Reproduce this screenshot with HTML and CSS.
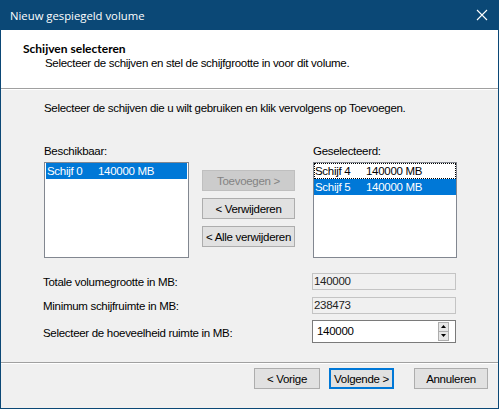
FILE: index.html
```html
<!DOCTYPE html>
<html lang="nl">
<head>
  <meta charset="UTF-8" />
  <title>Nieuw gespiegeld volume</title>
  <link rel="stylesheet" href="styles.css">
</head>
<body>
  <div class="window">
    <div class="titlebar">
      <span class="title">Nieuw gespiegeld volume</span>
      <svg class="close" width="12" height="12" viewBox="0 0 12 12">
        <path d="M1 1 L11 11 M11 1 L1 11" stroke="#fff" stroke-width="1.1" fill="none" />
      </svg>
    </div>

    <div class="header">
      <div class="header-title">Schijven selecteren</div>
      <div class="header-sub">Selecteer de schijven en stel de schijfgrootte in voor dit volume.</div>
    </div>

    <div class="content">
      <p class="intro">Selecteer de schijven die u wilt gebruiken en klik vervolgens op Toevoegen.</p>

      <div class="pickers">
        <div class="picker picker-left">
          <div class="picker-label">Beschikbaar:</div>
          <div class="listbox">
            <div class="item selected"><span class="disk">Schijf 0</span><span>140000 MB</span></div>
          </div>
        </div>

        <div class="actions">
          <button class="btn" disabled>Toevoegen &gt;</button>
          <button class="btn">&lt; Verwijderen</button>
          <button class="btn">&lt; Alle verwijderen</button>
        </div>

        <div class="picker picker-right">
          <div class="picker-label">Geselecteerd:</div>
          <div class="listbox">
            <div class="item focused"><span class="disk">Schijf 4</span><span>140000 MB</span></div>
            <div class="item selected"><span class="disk">Schijf 5</span><span>140000 MB</span></div>
          </div>
        </div>
      </div>

      <div class="sizes">
        <div class="size-label">Totale volumegrootte in MB:</div>
        <div class="field readonly">140000</div>

        <div class="size-label">Minimum schijfruimte in MB:</div>
        <div class="field readonly">238473</div>

        <div class="size-label">Selecteer de hoeveelheid ruimte in MB:</div>
        <div class="field spin">
          <span class="spin-value">140000</span>
          <span class="spin-buttons">
            <span class="spin-btn"><svg width="5" height="3" viewBox="0 0 5 3"><path d="M2.5 0 L5 3 L0 3 Z" fill="#000"/></svg></span>
            <span class="spin-btn"><svg width="5" height="3" viewBox="0 0 5 3"><path d="M0 0 L5 0 L2.5 3 Z" fill="#000"/></svg></span>
          </span>
        </div>
      </div>
    </div>

    <div class="footer">
      <button class="btn btn-back">&lt; Vorige</button>
      <button class="btn btn-next">Volgende &gt;</button>
      <button class="btn btn-cancel">Annuleren</button>
    </div>
  </div>
</body>
</html>
```

FILE: styles.css
```css
body {
  margin: 0;
  font-family: 'Liberation Sans', Arial, sans-serif;
  font-size: 11.5px;
  letter-spacing: -0.3px;
  color: #000;
  background: #f0f0f0;
}

.window {
  width: 499px;
  height: 409px;
  box-sizing: border-box;
  border: 1px solid #0b4876;
  border-top: none;
  display: flex;
  flex-direction: column;
  background: #f0f0f0;
}

/* ===== TITLE BAR ===== */
.titlebar {
  height: 30px;
  margin: 0 -1px;
  background: #0b4876;
  display: flex;
  align-items: center;
  justify-content: space-between;
  padding: 0 10px 0 10px;
  flex-shrink: 0;
}

.title {
  color: #fff;
  font-family: 'Open Sans', 'Noto Sans', sans-serif;
  font-size: 11.3px;
  letter-spacing: 0;
  padding-top: 1px;
}

.close { display: block; margin-right: 1px; }

/* ===== WIZARD HEADER ===== */
.header {
  height: 59px;
  background: #fff;
  border-bottom: 1px solid #a0a0a0;
  padding: 11px 0 0 22px;
  box-sizing: border-box;
  flex-shrink: 0;
}

.header-title {
  font-family: Lato, 'Liberation Sans', sans-serif;
  font-size: 12px;
  font-weight: bold;
  letter-spacing: 0;
  line-height: 15px;
}

.header-sub {
  line-height: 15px;
  margin-left: 22px;
}

/* ===== CONTENT ===== */
.content {
  flex: 1;
  padding: 11px 0 0 43px;
  border-top: 1px solid #fff;
}

.intro {
  margin: 0;
  line-height: 14px;
}

.pickers {
  display: flex;
  margin-top: 29px;
}

.picker-label {
  line-height: 14px;
  margin-bottom: 4px;
}

.listbox {
  height: 96px;
  box-sizing: border-box;
  background: #fff;
  border: 1px solid #828790;
  padding: 0 1px;
}

.picker-left .listbox { width: 145px; }
.picker-right .listbox { width: 144px; padding: 0; }

.item {
  height: 16px;
  line-height: 16px;
  padding-left: 1px;
  white-space: nowrap;
  box-sizing: border-box;
}

.item .disk {
  display: inline-block;
  width: 51px;
}

.item.selected {
  background: #0078d7;
  color: #fff;
}

.item.focused {
  outline: 1px dotted #000;
  outline-offset: -1px;
}

.actions {
  display: flex;
  flex-direction: column;
  gap: 7px;
  margin: 26px 18px 0 13px;
}

.btn {
  font-family: inherit;
  font-size: 11.5px;
  letter-spacing: -0.3px;
  color: #000;
  height: 21px;
  padding: 0;
  white-space: nowrap;
  background: #e1e1e1;
  border: 1px solid #adadad;
  border-radius: 0;
  box-sizing: border-box;
}

.actions .btn { width: 93px; }

.btn:disabled {
  background: #cccccc;
  border-color: #bfbfbf;
  color: #838383;
}

/* ===== SIZE FIELDS ===== */
.sizes {
  display: grid;
  grid-template-columns: 269px 144px;
  grid-template-rows: 17px 17px 23px;
  row-gap: 7px;
  align-items: center;
  margin: 15px 0 0 -1px;
}

.size-label { line-height: 14px; }

.field {
  height: 100%;
  box-sizing: border-box;
  line-height: 15px;
}

.field.readonly {
  background: #f0f0f0;
  border: 1px solid #c4c4c4;
  padding-left: 1px;
  color: #222;
}

.field.spin {
  background: #fff;
  border: 1px solid #7a7a7a;
  display: flex;
  align-items: center;
  justify-content: space-between;
  padding: 1px 6px 1px 4px;
  margin-top: -3px;
  height: 23px;
}

.spin-buttons {
  display: flex;
  flex-direction: column;
  width: 11px;
  height: 19px;
}

.spin-btn {
  flex: 1;
  display: flex;
  align-items: center;
  justify-content: center;
  background: #e6e6e6;
  border: 1px solid #adadad;
}

.spin-btn + .spin-btn { border-top: none; }

.spin-btn svg { display: block; }

/* ===== FOOTER ===== */
.footer {
  height: 46px;
  box-sizing: border-box;
  border-top: 1px solid #a0a0a0;
  display: flex;
  align-items: flex-start;
  justify-content: flex-end;
  padding: 5px 10px 0 0;
  box-shadow: inset 0 1px 0 #fff;
}

.btn-back { width: 66px; margin-right: 9px; }
.btn-next { width: 65px; margin-right: 20px; border: 2px solid #0078d7; }
.btn-cancel { width: 74px; }
```
